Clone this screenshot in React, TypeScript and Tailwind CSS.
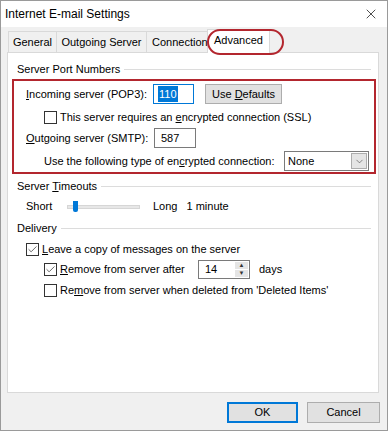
import { Check, ChevronDown, X } from "lucide-react";

function Checkbox({ checked }: { checked?: boolean }) {
  return (
    <span className="flex h-[13px] w-[13px] shrink-0 items-center justify-center border border-[#333] bg-white">
      {checked && <Check size={11} strokeWidth={1.6} className="text-[#333]" />}
    </span>
  );
}

function GroupHeader({ children }: { children: React.ReactNode }) {
  return (
    <div className="ml-[9px] mr-[7px] flex h-[15px] items-center gap-[4px]">
      <span className="whitespace-nowrap">{children}</span>
      <span className="h-px flex-1 bg-[#dcdcdc]" />
    </div>
  );
}

export default function App() {
  return (
    <div className="relative flex h-[431px] w-[388px] flex-col overflow-hidden border border-[#9a9a9a] bg-[#f0f0f0] font-['Liberation_Sans',Arial,sans-serif] text-[11px] text-black">
      {/* title bar */}
      <div className="flex h-[26px] shrink-0 items-center justify-between bg-white pl-[4px] pr-[8px]">
        <span className="text-[12px]">Internet E-mail Settings</span>
        <X size={16} strokeWidth={1.2} className="text-[#222]" />
      </div>

      {/* tabs */}
      <div className="mt-[4px] flex h-[21px] shrink-0 items-end pl-[7px]">
        <div className="flex h-[21px] w-[49px] items-center justify-center border border-b-0 border-[#d9d9d9] bg-[#f0f0f0]">General</div>
        <div className="flex h-[21px] w-[90px] items-center justify-center border border-b-0 border-l-0 border-[#d9d9d9] bg-[#f0f0f0]">Outgoing Server</div>
        <div className="flex h-[21px] w-[60px] items-center overflow-hidden border-t border-[#d9d9d9] bg-[#f0f0f0] pl-[5px] whitespace-nowrap">Connection</div>
        <div className="relative z-10 -mb-px flex h-[24px] w-[63px] items-center justify-center border border-b-0 border-[#d9d9d9] bg-white pb-[2px]">Advanced</div>
      </div>

      {/* panel */}
      <div className="ml-[6px] flex h-[341px] w-[372px] shrink-0 flex-col border border-[#d9d9d9] bg-white">
        <div className="mt-[9px]">
          <GroupHeader>Server Port Numbers</GroupHeader>
        </div>

        <div className="ml-[4px] mt-[2px] flex h-[95px] w-[364px] flex-col border-2 border-[#b3262e]">
          <div className="mt-[3px] flex h-[20px] items-center pl-[12px]">
            <span className="w-[127px]">
              <u>I</u>ncoming server (POP3):
            </span>
            <div className="flex h-[20px] w-[41px] items-center border border-[#0078d7] pl-[4px]">
              <span className="bg-[#0078d7] px-px text-white">110</span>
            </div>
            <div className="ml-[11px] flex h-[20px] w-[77px] items-center justify-center border border-[#adadad] bg-[#e1e1e1]">
              <span>
                Use <u>D</u>efaults
              </span>
            </div>
          </div>

          <div className="mt-[7px] flex h-[13px] items-center gap-[3px] pl-[30px]">
            <Checkbox />
            <span>
              This server requires an <u>e</u>ncrypted connection (SSL)
            </span>
          </div>

          <div className="mt-[4px] flex h-[20px] items-center pl-[12px]">
            <span className="w-[128px]">
              <u>O</u>utgoing server (SMTP):
            </span>
            <div className="flex h-[20px] w-[42px] items-center border border-[#7a7a7a] pl-[6px]">587</div>
          </div>

          <div className="mt-[3px] flex h-[20px] items-center pl-[30px]">
            <span className="w-[240px]">
              Use the following type of en<u>c</u>rypted connection:
            </span>
            <div className="flex h-[20px] w-[85px] items-center justify-between border border-[#7a7a7a] pl-[3px] pr-px">
              <span>None</span>
              <span className="flex h-[16px] w-[16px] items-center justify-center border border-[#adadad] bg-[#e5e5e5]">
                <ChevronDown size={11} strokeWidth={1.3} className="text-[#444]" />
              </span>
            </div>
          </div>
        </div>

        <div className="mt-[5px]">
          <GroupHeader>
            Server <u>T</u>imeouts
          </GroupHeader>
        </div>

        <div className="mt-[5px] flex h-[15px] items-center pl-[18px]">
          <span className="w-[41px]">Short</span>
          <div className="relative h-[4px] w-[73px] border border-[#d6d6d6] bg-[#e7e7e7]">
            <span className="absolute left-[5px] top-[-5px] h-[11px] w-[5px] rounded-b-[2px] bg-[#0078d7]" />
          </div>
          <span className="ml-[13px]">Long</span>
          <span className="ml-[9px]">1 minute</span>
        </div>

        <div className="mt-[7px]">
          <GroupHeader>Delivery</GroupHeader>
        </div>

        <div className="mt-[6px] flex h-[15px] items-center gap-[3px] pl-[18px]">
          <Checkbox checked />
          <span>
            <u>L</u>eave a copy of messages on the server
          </span>
        </div>

        <div className="mt-[2px] flex h-[20px] items-center pl-[36px]">
          <Checkbox checked />
          <span className="ml-[3px] w-[138px]">
            <u>R</u>emove from server after
          </span>
          <div className="flex h-[19px] w-[52px] items-center border border-[#7a7a7a]">
            <span className="flex-1 pl-[6px]">14</span>
            <div className="flex h-full w-[15px] flex-col gap-px bg-white p-px">
              <span className="flex flex-1 items-center justify-center bg-[#e5e5e5] text-[6px] leading-none text-[#333]">▲</span>
              <span className="flex flex-1 items-center justify-center bg-[#e5e5e5] text-[6px] leading-none text-[#333]">▼</span>
            </div>
          </div>
          <span className="ml-[9px]">days</span>
        </div>

        <div className="mt-[4px] flex h-[15px] items-center gap-[3px] pl-[36px]">
          <Checkbox />
          <span>
            Re<u>m</u>ove from server when deleted from 'Deleted Items'
          </span>
        </div>
      </div>

      {/* buttons */}
      <div className="mt-[9px] flex justify-end gap-[9px] pr-[7px]">
        <div className="flex h-[21px] w-[71px] items-center justify-center border-2 border-[#0078d7] bg-[#e1e1e1]">OK</div>
        <div className="flex h-[21px] w-[73px] items-center justify-center border border-[#adadad] bg-[#e1e1e1]">Cancel</div>
      </div>

      {/* annotation around the Advanced tab */}
      <span className="absolute left-[206px] top-[28px] z-20 h-[26px] w-[77px] rounded-[13px] border-2 border-[#b3262e]" />
    </div>
  );
}
